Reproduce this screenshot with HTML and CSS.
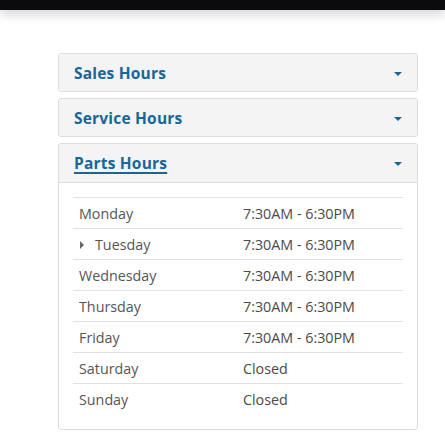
FILE: index.html
```html
<!DOCTYPE html>
<html>
<head>
<meta charset="utf-8">
<link rel="stylesheet" href="styles.css">
</head>
<body>
<div class="hero"></div>
<div class="accordion">
  <div class="panel">
    <div class="panel-heading"><span class="title">Sales Hours</span><span class="caret"></span></div>
  </div>
  <div class="panel">
    <div class="panel-heading"><span class="title">Service Hours</span><span class="caret"></span></div>
  </div>
  <div class="panel open">
    <div class="panel-heading"><span class="title link">Parts Hours</span><span class="caret"></span></div>
    <div class="panel-body">
      <div class="hours">
        <div class="row"><span class="day">Monday</span><span class="time">7:30AM - 6:30PM</span></div>
        <div class="row"><span class="day"><span class="arrow"></span>Tuesday</span><span class="time">7:30AM - 6:30PM</span></div>
        <div class="row"><span class="day">Wednesday</span><span class="time">7:30AM - 6:30PM</span></div>
        <div class="row"><span class="day">Thursday</span><span class="time">7:30AM - 6:30PM</span></div>
        <div class="row"><span class="day">Friday</span><span class="time">7:30AM - 6:30PM</span></div>
        <div class="row"><span class="day">Saturday</span><span class="time">Closed</span></div>
        <div class="row"><span class="day">Sunday</span><span class="time">Closed</span></div>
      </div>
    </div>
  </div>
</div>
</body>
</html>
```

FILE: styles.css
```css
html, body {
  margin: 0;
  padding: 0;
  background: #fff;
  font-family: "Open Sans", "Liberation Sans", sans-serif;
}
.hero {
  height: 10px;
  background: #0b0b0d;
  box-shadow: 0 3px 12px rgba(0,0,0,0.22);
}
.accordion {
  margin: 43px 0 0 58px;
  width: 360px;
  display: flex;
  flex-direction: column;
  gap: 6px;
}
.panel {
  border: 1px solid #dcdcdc;
  border-radius: 3px;
  background: #fff;
}
.panel-heading {
  height: 37px;
  background: #f4f4f4;
  display: flex;
  align-items: center;
  justify-content: space-between;
  padding: 0 15px 0 15px;
  border-radius: 3px;
}
.open .panel-heading {
  height: 38px;
  border-bottom: 1px solid #dcdcdc;
  border-radius: 3px 3px 0 0;
}
.title {
  font-size: 15.5px;
  font-weight: 700;
  color: #17669a;
  letter-spacing: 0.2px;
}
.title.link {
  text-decoration: underline;
  text-underline-offset: 3px;
  text-decoration-thickness: 1.5px;
}
.caret {
  width: 0;
  height: 0;
  border-left: 4px solid transparent;
  border-right: 4px solid transparent;
  border-top: 4px solid #17669a;
  margin-top: 2px;
}
.panel-body {
  padding: 14px 14px 15px 14px;
}
.hours {
  display: flex;
  flex-direction: column;
  font-size: 14.3px;
}
.row {
  height: 30px;
  border-top: 1px solid #e2e2e2;
  display: flex;
  align-items: center;
  padding-left: 6px;
}
.day {
  width: 164px;
  color: #555;
}
.time {
  color: #4a4a4a;
}
.arrow {
  display: inline-block;
  width: 0;
  height: 0;
  border-top: 4px solid transparent;
  border-bottom: 4px solid transparent;
  border-left: 4px solid #666;
  margin: 0 11px 1px 1px;
  vertical-align: middle;
}
```
